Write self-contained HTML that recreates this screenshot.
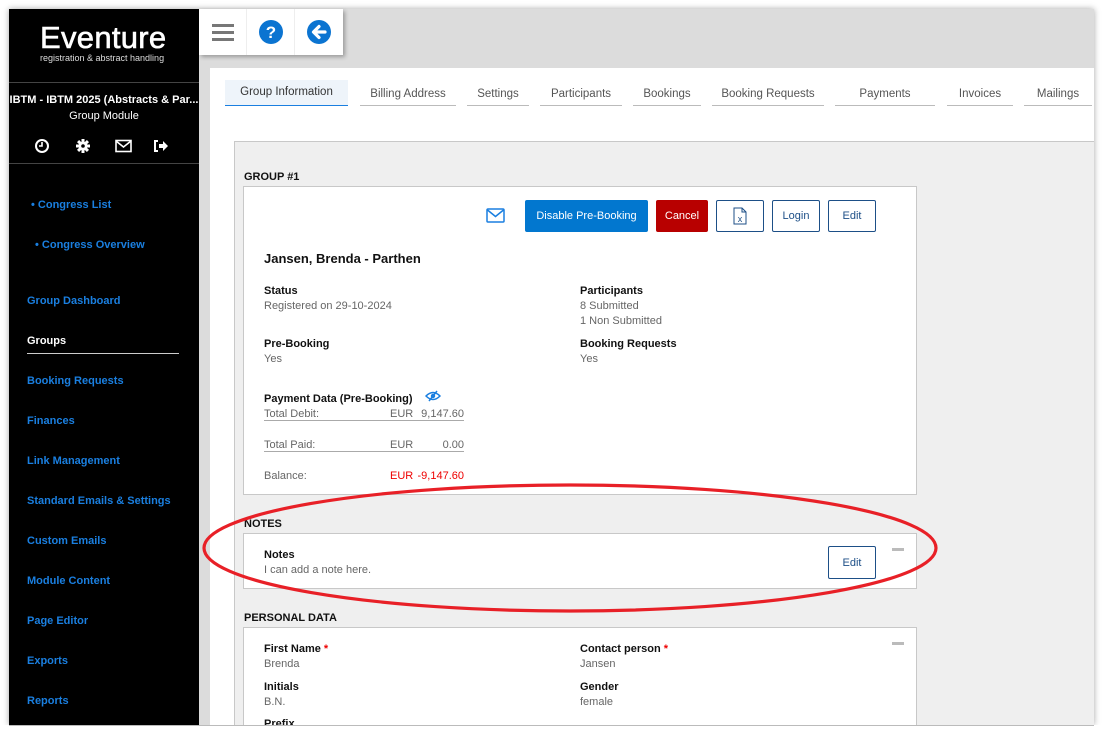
<!DOCTYPE html>
<html><head><meta charset="utf-8"><style>
*{margin:0;padding:0;box-sizing:border-box}
body{width:1102px;height:733px;background:#fff;position:relative;overflow:hidden;font-family:"Liberation Sans",sans-serif;font-size:11px;color:#222}
.a{position:absolute;white-space:nowrap}
#frame{position:absolute;left:9px;top:9px;width:1085px;height:716px;background:#dcdcdc;box-shadow:0 0 6px rgba(0,0,0,.35);overflow:hidden}
#side{position:absolute;left:9px;top:9px;width:190px;height:716px;background:#000}
.nav{position:absolute;left:27px;color:#1a7fe0;font-weight:bold;font-size:11px;margin-top:2px}
.tab{position:absolute;top:86px;height:20px;border-bottom:1px solid #bbb;color:#555;text-align:center;font-size:11.5px;padding-top:2px}
.lbl{position:absolute;font-weight:bold;color:#111;font-size:11px;margin-top:2px;white-space:nowrap}
.val{position:absolute;color:#666;font-size:11px;margin-top:2px;white-space:nowrap}
.box{position:absolute;left:243px;width:674px;background:#fff;border:1px solid #c8c8c8}
.btn{position:absolute;top:200px;height:32px;border:1px solid #1d4f87;border-radius:2px;color:#1d4f87;background:#fff;font-size:11px;display:flex;align-items:center;justify-content:center}
.sec{position:absolute;left:244px;font-weight:bold;font-size:11px;color:#111;margin-top:2px}
.dash{position:absolute;width:12px;height:3px;background:#bbb}
</style></head><body>
<div id="frame"></div>
<div id="side">
 <div class="a" style="left:31px;top:11px;color:#fff;font-size:31px;letter-spacing:0.3px;-webkit-text-stroke:0.6px #fff">Eventure</div>
 <div class="a" style="left:31px;top:44px;color:#ddd;font-size:9px">registration &amp; abstract handling</div>
 <div style="position:absolute;left:0;top:73px;width:190px;height:1px;background:#444"></div>
 <div class="a" style="left:0;top:85px;width:190px;text-align:center;color:#fff;font-weight:bold;font-size:11px;overflow:hidden">IBTM - IBTM 2025 (Abstracts &amp; Par...</div>
 <div class="a" style="left:0;top:101px;width:190px;text-align:center;color:#fff;font-size:11px">Group Module</div>
 <svg style="position:absolute;left:25px;top:129px" width="150" height="16" viewBox="0 0 150 16">
  <circle cx="8" cy="8" r="6" fill="none" stroke="#fff" stroke-width="2"/><path d="M8 4v4h-3" stroke="#fff" stroke-width="1.6" fill="none"/>
  <g transform="translate(49,8)" fill="#fff"><circle r="4.5"/><rect x="-1.5" y="-7" width="3" height="14"/><rect x="-7" y="-1.5" width="14" height="3"/><rect x="-1.5" y="-7" width="3" height="14" transform="rotate(45)"/><rect x="-1.5" y="-7" width="3" height="14" transform="rotate(-45)"/><circle r="1.8" fill="#000"/></g>
  <rect x="82" y="2.5" width="15" height="11" fill="none" stroke="#fff" stroke-width="1.6"/><path d="M82 3l7.5 6 7.5-6" fill="none" stroke="#fff" stroke-width="1.6"/>
  <path d="M124 3h-3v10h3" fill="none" stroke="#fff" stroke-width="2"/><path d="M125 6h4v-3l5 5-5 5v-3h-4z" fill="#fff"/>
 </svg>
 <div style="position:absolute;left:0;top:154px;width:190px;height:1px;background:#444"></div>
</div>
<div class="nav" style="top:197px;left:31px">• Congress List</div>
<div class="nav" style="top:237px;left:35px">• Congress Overview</div>
<div class="nav" style="top:293px">Group Dashboard</div>
<div class="nav" style="top:333px;color:#fff">Groups</div>
<div style="position:absolute;left:27px;top:353px;width:152px;height:1px;background:#ccc"></div>
<div class="nav" style="top:373px">Booking Requests</div>
<div class="nav" style="top:413px">Finances</div>
<div class="nav" style="top:453px">Link Management</div>
<div class="nav" style="top:493px">Standard Emails &amp; Settings</div>
<div class="nav" style="top:533px">Custom Emails</div>
<div class="nav" style="top:573px">Module Content</div>
<div class="nav" style="top:613px">Page Editor</div>
<div class="nav" style="top:653px">Exports</div>
<div class="nav" style="top:693px">Reports</div>

<div style="position:absolute;left:199px;top:9px;width:144px;height:46px;background:#fff;box-shadow:2px 2px 4px rgba(0,0,0,.3)">
 <div style="position:absolute;left:47px;top:0;width:1px;height:46px;background:#eee"></div>
 <div style="position:absolute;left:95px;top:0;width:1px;height:46px;background:#eee"></div>
 <svg style="position:absolute;left:13px;top:13px" width="22" height="20"><rect y="2" width="22" height="3" fill="#777"/><rect y="9" width="22" height="3" fill="#777"/><rect y="16" width="22" height="3" fill="#777"/></svg>
 <svg style="position:absolute;left:60px;top:11px" width="24" height="24"><circle cx="12" cy="12" r="12" fill="#0b74d1"/><text x="12" y="18" text-anchor="middle" font-family="Liberation Sans" font-weight="bold" font-size="17" fill="#fff">?</text></svg>
 <svg style="position:absolute;left:108px;top:11px" width="24" height="24"><circle cx="12" cy="12" r="12" fill="#0b74d1"/><path d="M18 12H7M12 6.5L6.5 12 12 17.5" stroke="#fff" stroke-width="3.2" fill="none" stroke-linecap="round" stroke-linejoin="round"/></svg>
</div>

<div style="position:absolute;left:210px;top:68px;width:884px;height:657px;background:#fff"></div>
<div class="tab" style="left:225px;width:123px;top:80px;height:26px;background:#eef4fa;border-bottom:1px solid #1a7fe0;color:#333;padding-top:6px">Group Information</div>
<div class="tab" style="left:360px;width:96px">Billing Address</div>
<div class="tab" style="left:467px;width:62px">Settings</div>
<div class="tab" style="left:540px;width:82px">Participants</div>
<div class="tab" style="left:633px;width:68px">Bookings</div>
<div class="tab" style="left:712px;width:112px">Booking Requests</div>
<div class="tab" style="left:835px;width:100px">Payments</div>
<div class="tab" style="left:947px;width:66px">Invoices</div>
<div class="tab" style="left:1024px;width:68px">Mailings</div>

<div style="position:absolute;left:234px;top:141px;width:860px;height:584px;background:#efefef;border-top:1px solid #c8c8c8;border-left:1px solid #c8c8c8"></div>
<div class="sec" style="top:169px">GROUP #1</div>
<div class="box" style="top:186px;height:309px"></div>
<svg style="position:absolute;left:486px;top:208px" width="19" height="15"><rect x="1" y="1" width="17" height="13" rx="1" fill="none" stroke="#1a7fe0" stroke-width="1.5"/><path d="M1.5 2l8 6.5 8-6.5" fill="none" stroke="#1a7fe0" stroke-width="1.5"/></svg>
<div class="btn" style="left:525px;width:123px;background:#0277cf;border-color:#0277cf;color:#fff">Disable Pre-Booking</div>
<div class="btn" style="left:656px;width:52px;background:#b80000;border-color:#b80000;color:#fff">Cancel</div>
<div class="btn" style="left:716px;width:48px"><svg width="14" height="18"><path d="M1 1h8l4 4v12H1z" fill="none" stroke="#1d4f87"/><path d="M9 1v4h4" fill="none" stroke="#1d4f87"/><text x="7" y="15" text-anchor="middle" font-size="9" font-family="Liberation Sans" fill="#1d4f87">x</text></svg></div>
<div class="btn" style="left:772px;width:48px">Login</div>
<div class="btn" style="left:828px;width:48px">Edit</div>
<div class="a" style="left:264px;top:251px;font-size:13px;font-weight:bold;color:#111">Jansen, Brenda - Parthen</div>
<div class="lbl" style="left:264px;top:283px">Status</div><div class="val" style="left:264px;top:298px">Registered on 29-10-2024</div>
<div class="lbl" style="left:580px;top:283px">Participants</div><div class="val" style="left:580px;top:298px">8 Submitted</div><div class="val" style="left:580px;top:313px">1 Non Submitted</div>
<div class="lbl" style="left:264px;top:336px">Pre-Booking</div><div class="val" style="left:264px;top:351px">Yes</div>
<div class="lbl" style="left:580px;top:336px">Booking Requests</div><div class="val" style="left:580px;top:351px">Yes</div>
<div class="lbl" style="left:264px;top:391px">Payment Data (Pre-Booking)</div>
<svg style="position:absolute;left:425px;top:390px" width="16" height="12"><path d="M1 6Q8 -1 15 6Q8 13 1 6z" fill="none" stroke="#1a7fe0" stroke-width="1.5"/><circle cx="8" cy="6" r="2.2" fill="#1a7fe0"/><path d="M4 11L12 1" stroke="#1a7fe0" stroke-width="1.5"/></svg>
<div class="val" style="left:264px;top:406px">Total Debit:</div><div class="val" style="left:390px;top:406px">EUR</div><div class="val" style="left:420px;top:406px;width:44px;text-align:right">9,147.60</div>
<div style="position:absolute;left:264px;top:420px;width:200px;height:1px;background:#aaa"></div>
<div class="val" style="left:264px;top:437px">Total Paid:</div><div class="val" style="left:390px;top:437px">EUR</div><div class="val" style="left:420px;top:437px;width:44px;text-align:right">0.00</div>
<div style="position:absolute;left:264px;top:451px;width:200px;height:1px;background:#aaa"></div>
<div class="val" style="left:264px;top:468px">Balance:</div><div class="val" style="left:390px;top:468px;color:#e00">EUR</div><div class="val" style="left:412px;top:468px;width:52px;text-align:right;color:#e00">-9,147.60</div>

<div class="sec" style="top:516px">NOTES</div>
<div class="box" style="top:533px;height:56px"></div>
<div class="lbl" style="left:264px;top:547px">Notes</div><div class="val" style="left:264px;top:562px">I can add a note here.</div>
<div class="btn" style="left:828px;top:546px;height:33px;width:48px">Edit</div>
<div class="dash" style="left:892px;top:548px"></div>

<div class="sec" style="top:610px">PERSONAL DATA</div>
<div class="box" style="top:627px;height:98px;border-bottom:none"></div>
<div class="dash" style="left:892px;top:642px"></div>
<div class="lbl" style="left:264px;top:641px">First Name <span style="color:#e00">*</span></div><div class="val" style="left:264px;top:656px">Brenda</div>
<div class="lbl" style="left:580px;top:641px">Contact person <span style="color:#e00">*</span></div><div class="val" style="left:580px;top:656px">Jansen</div>
<div class="lbl" style="left:264px;top:679px">Initials</div><div class="val" style="left:264px;top:694px">B.N.</div>
<div class="lbl" style="left:580px;top:679px">Gender</div><div class="val" style="left:580px;top:694px">female</div>
<div class="lbl" style="left:264px;top:716px">Prefix</div>
<div style="position:absolute;left:0;top:725px;width:1102px;height:8px;background:#fff"></div>
<div style="position:absolute;left:9px;top:725px;width:1085px;height:1px;background:#bbb"></div>

<svg style="position:absolute;left:0;top:0" width="1102" height="733"><ellipse cx="570" cy="548" rx="366" ry="63" fill="none" stroke="#e82027" stroke-width="3.2"/></svg>
</body></html>
